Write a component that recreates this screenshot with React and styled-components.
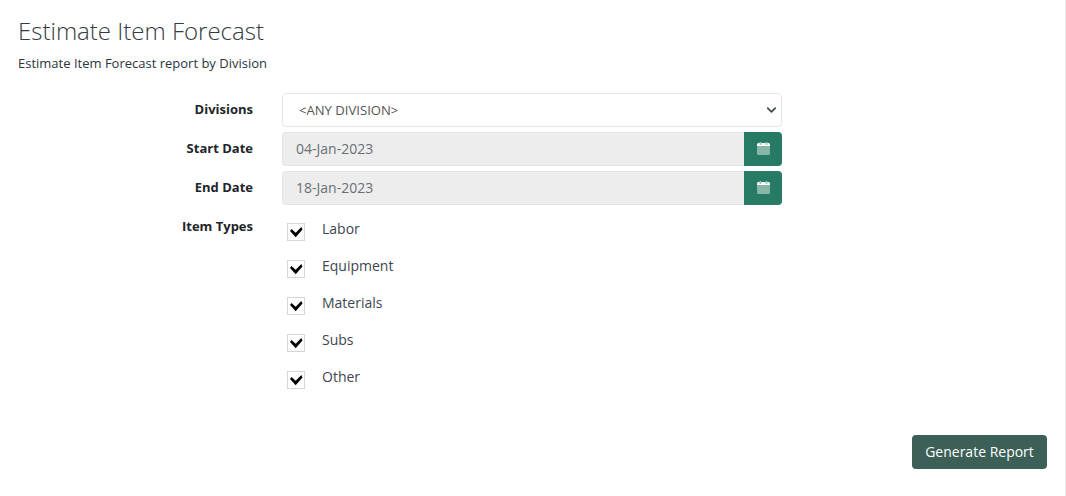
import React from 'react';
import styled, {createGlobalStyle} from 'styled-components';

const GlobalStyle = createGlobalStyle`
* {
    box-sizing:border-box;
}
body {
    margin:0;
    background-color:#fff;
    font-family:'Open Sans', sans-serif;
    color:#212529;
}
`

const Page = styled.div`
display:flex;
flex-direction:column;
width:1066px;
height:496px;
padding:15px 18px 0 18px;
border-right:1px solid #e8e8e8;
overflow:hidden;
`

const Title = styled.h1`
margin:0;
font-size:24px;
line-height:32px;
font-weight:300;
color:#343a40;
`

const Subtitle = styled.p`
margin:8px 0 0;
font-size:13px;
line-height:16px;
color:#2b3440;
`

const Form = styled.form`
display:flex;
flex-direction:column;
gap:5px;
margin-top:22px;
`

const Row = styled.div`
display:grid;
grid-template-columns:235px 500px;
column-gap:29px;
`

const Label = styled.label`
font-size:13px;
font-weight:700;
line-height:18px;
padding-top:7px;
text-align:right;
color:#212529;
`

const Select = styled.select`
width:100%;
height:34px;
padding:0 36px 0 16px;
appearance:none;
border:1px solid #e3e5e8;
border-radius:4px;
font-family:inherit;
font-size:13.1px;
color:#555;
background:#fff url("data:image/svg+xml,%3csvg xmlns='http://www.w3.org/2000/svg' viewBox='0 0 16 16'%3e%3cpath fill='none' stroke='%234a4f54' stroke-linecap='round' stroke-linejoin='round' stroke-width='3' d='M2 5l6 6 6-6'/%3e%3c/svg%3e") no-repeat right 3px center/13px 10px;
`

const DateGroup = styled.div`
display:flex;
height:34px;
`

const DateInput = styled.input`
flex:1;
min-width:0;
padding:0 13px 2px;
border:1px solid #e3e5e8;
border-right:none;
border-radius:4px 0 0 4px;
background-color:#ededed;
font-family:inherit;
font-size:14px;
color:#6a6f75;
`

const CalendarButton = styled.button`
display:flex;
align-items:center;
justify-content:center;
width:38px;
padding:0;
border:none;
border-radius:0 4px 4px 0;
background-color:#277a63;
`

const CheckList = styled.div`
display:flex;
flex-direction:column;
gap:15px;
padding-top:9px;
`

const CheckRow = styled.div`
display:flex;
align-items:flex-start;
height:22px;
padding-left:5px;
font-size:14px;
line-height:20px;
color:#3d4650;
`

const CheckBox = styled.span`
display:flex;
align-items:center;
justify-content:center;
width:18px;
height:18px;
margin-top:4px;
margin-right:17px;
border:1px solid #d6d6d6;
background-color:#fff;
`

const Footer = styled.div`
display:flex;
justify-content:flex-end;
margin-top:46px;
`

const GenerateButton = styled.button`
width:135px;
height:34px;
padding:0 0 2px;
border:none;
border-radius:4px;
background-color:#3c5f57;
font-family:inherit;
font-size:14px;
color:#fff;
`

const CalendarIcon = () => (
    <svg width="14" height="16" viewBox="0 0 14 16">
        <rect x="1" y="4" width="13" height="10" rx="1.500" fill="#fff" fillOpacity=".45"/>
        <path d="M1 5V3.500A1.500 1.500 0 0 1 2.500 2h10A1.500 1.500 0 0 1 14 3.500V5z" fill="#fff"/>
        <rect x="3.500" y="1" width="2" height="3" rx=".8" fill="#9cc4b8"/>
        <rect x="9.500" y="1" width="2" height="3" rx=".8" fill="#9cc4b8"/>
    </svg>
)

const CheckIcon = () => (
    <svg width="16" height="16" viewBox="0 0 16 16">
        <path d="M2 7L3.500 5L7.700 8.700L13.300 3L14.500 5.500L7.700 13.300z" fill="#000"/>
    </svg>
)

const itemTypes = ['Labor','Equipment','Materials','Subs','Other'];

const App = () => {
    return (
        <Page>
            <GlobalStyle/>
            <Title>Estimate Item Forecast</Title>
            <Subtitle>Estimate Item Forecast report by Division</Subtitle>
            <Form>
                <Row>
                    <Label>Divisions</Label>
                    <Select defaultValue="any">
                        <option value="any">&lt;ANY DIVISION&gt;</option>
                    </Select>
                </Row>
                <Row>
                    <Label>Start Date</Label>
                    <DateGroup>
                        <DateInput readOnly value="04-Jan-2023"/>
                        <CalendarButton type="button"><CalendarIcon/></CalendarButton>
                    </DateGroup>
                </Row>
                <Row>
                    <Label>End Date</Label>
                    <DateGroup>
                        <DateInput readOnly value="18-Jan-2023"/>
                        <CalendarButton type="button"><CalendarIcon/></CalendarButton>
                    </DateGroup>
                </Row>
                <Row>
                    <Label>Item Types</Label>
                    <CheckList>
                        {itemTypes.map((item)=>(
                            <CheckRow key={item}>
                                <CheckBox><CheckIcon/></CheckBox>
                                {item}
                            </CheckRow>
                        ))}
                    </CheckList>
                </Row>
            </Form>
            <Footer>
                <GenerateButton type="button">Generate Report</GenerateButton>
            </Footer>
        </Page>
    )
}

export default App;
